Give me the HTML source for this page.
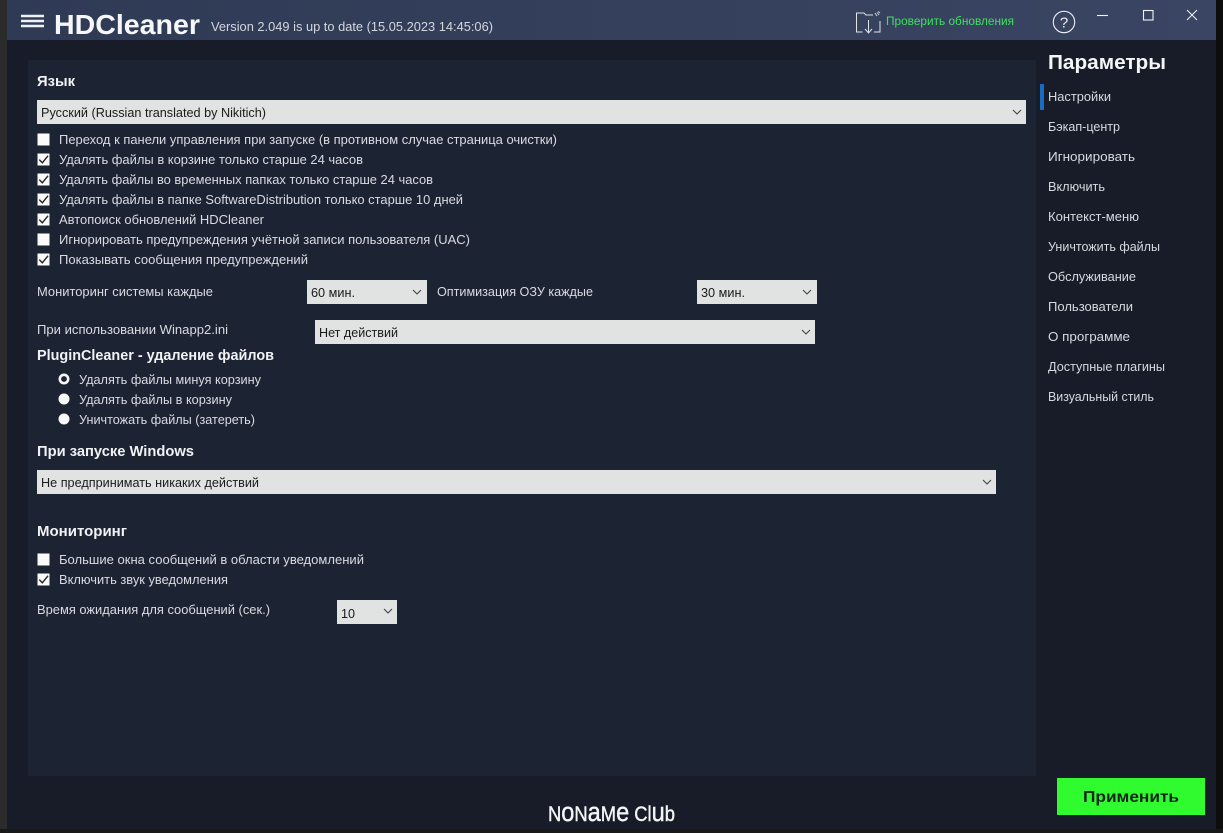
<!DOCTYPE html>
<html lang="ru"><head><meta charset="utf-8"><title>HDCleaner</title>
<style>
html,body{margin:0;padding:0;background:#111;width:1223px;height:833px;overflow:hidden}
svg{display:block}
text{font-family:"Liberation Sans","DejaVu Sans",sans-serif;font-size:13px;fill:#d9dbe0}
.d{fill:#1a1a1a;font-size:12.5px}
.b{font-weight:bold;fill:#f1f2f4;font-size:14.5px}
.s{fill:#d6d9df}
</style></head><body>
<svg width="1223" height="833" viewBox="0 0 1223 833" xmlns="http://www.w3.org/2000/svg">
<defs>
<linearGradient id="tb" x1="0" x2="1" y1="0" y2="0"><stop offset="0" stop-color="#2f3a55"/><stop offset="1" stop-color="#394562"/></linearGradient>
<path id="c" d="M-.5 -.5h12v12h-12z" fill="#fafafa"/>
<path id="k" d="M1.3 5.600l3 3.200 5.700-7" fill="none" stroke="#222" stroke-width="1.400"/>
<path id="a" d="M0 0l4 4 4-4" fill="none" stroke="#444" stroke-width="1.100"/>
</defs>
<rect width="7" height="833" fill="#2b2b2b"/>
<rect x="1216" width="7" height="833" fill="#0d0d0d"/>
<rect y="829" width="1223" height="4" fill="#181818"/>
<rect x="7" width="1209" height="829" fill="#171c28"/>
<rect x="7" width="1209" height="40" fill="url(#tb)"/>
<rect x="28" y="60" width="1008" height="716" fill="#1c2333"/>

<!-- title bar -->
<path d="M21 16h23M21 21h23M21 26h23" stroke="#eef0f3" stroke-width="2.400"/>
<text x="54" y="34" textLength="146" lengthAdjust="spacingAndGlyphs" style="font-size:28px;font-weight:bold;fill:#f6f7f9">HDCleaner</text>
<text x="211" y="31" textLength="282" lengthAdjust="spacingAndGlyphs" style="fill:#d3d7de">Version 2.049 is up to date (15.05.2023 14:45:06)</text>
<path d="M873 15h-7l-2-2h-7.500v19h6M880 21v11h-6M868.500 20v13M865 29l3.500 4 3.500-4" fill="none" stroke="#dfe3ea" stroke-width="1"/>
<path d="M875 13l2 3M877 12.500l2 2.500M878 11.500l2 1.500" stroke="#cfd3da" stroke-width="1"/>
<text x="886" y="25" textLength="128" lengthAdjust="spacingAndGlyphs" style="font-size:11.500px;fill:#3fe05f">Проверить обновления</text>
<circle cx="1064" cy="22" r="10.700" fill="none" stroke="#eef0f3" stroke-width="1.100"/>
<text x="1064" y="27.500" text-anchor="middle" style="font-size:15px;fill:#eef0f3">?</text>
<path d="M1097 15.500h11" stroke="#f2f3f5" stroke-width="1.100"/>
<rect x="1143.500" y="10.500" width="9.500" height="9.500" fill="none" stroke="#f2f3f5" stroke-width="1.100"/>
<path d="M1187 10l10 10M1197 10l-10 10" stroke="#f2f3f5" stroke-width="1"/>

<!-- language -->
<text class="b" x="37" y="86" textLength="38" lengthAdjust="spacingAndGlyphs">Язык</text>
<rect x="37" y="100" width="989" height="24" fill="#e1e2e2"/>
<text class="d" x="41" y="117" textLength="225" lengthAdjust="spacingAndGlyphs">Русский (Russian translated by Nikitich)</text>
<use href="#a" x="1013" y="110"/>

<!-- checkboxes -->
<use href="#c" x="38" y="134"/>
<use href="#c" x="38" y="154"/><use href="#k" x="38" y="154"/>
<use href="#c" x="38" y="174"/><use href="#k" x="38" y="174"/>
<use href="#c" x="38" y="194"/><use href="#k" x="38" y="194"/>
<use href="#c" x="38" y="214"/><use href="#k" x="38" y="214"/>
<use href="#c" x="38" y="234"/>
<use href="#c" x="38" y="254"/><use href="#k" x="38" y="254"/>
<text x="59" y="144" textLength="498" lengthAdjust="spacingAndGlyphs">Переход к панели управления при запуске (в противном случае страница очистки)</text>
<text x="59" y="164" textLength="304" lengthAdjust="spacingAndGlyphs">Удалять файлы в корзине только старше 24 часов</text>
<text x="59" y="184" textLength="374" lengthAdjust="spacingAndGlyphs">Удалять файлы во временных папках только старше 24 часов</text>
<text x="59" y="204" textLength="404" lengthAdjust="spacingAndGlyphs">Удалять файлы в папке SoftwareDistribution только старше 10 дней</text>
<text x="59" y="224" textLength="205" lengthAdjust="spacingAndGlyphs">Автопоиск обновлений HDCleaner</text>
<text x="59" y="244" textLength="411" lengthAdjust="spacingAndGlyphs">Игнорировать предупреждения учётной записи пользователя (UAC)</text>
<text x="59" y="264" textLength="249" lengthAdjust="spacingAndGlyphs">Показывать сообщения предупреждений</text>

<!-- monitoring row -->
<text x="37" y="296" textLength="176" lengthAdjust="spacingAndGlyphs">Мониторинг системы каждые</text>
<rect x="307" y="280" width="120" height="24" fill="#e1e2e2"/>
<text class="d" x="311" y="297" textLength="44" lengthAdjust="spacingAndGlyphs">60 мин.</text>
<use href="#a" x="413" y="290"/>
<text x="437" y="296" textLength="156" lengthAdjust="spacingAndGlyphs">Оптимизация ОЗУ каждые</text>
<rect x="697" y="280" width="120" height="24" fill="#e1e2e2"/>
<text class="d" x="701" y="297" textLength="44" lengthAdjust="spacingAndGlyphs">30 мин.</text>
<use href="#a" x="803" y="290"/>

<text x="37" y="334" textLength="191" lengthAdjust="spacingAndGlyphs">При использовании Winapp2.ini</text>
<rect x="315" y="320" width="500" height="24" fill="#e1e2e2"/>
<text class="d" x="319" y="337" textLength="79" lengthAdjust="spacingAndGlyphs">Нет действий</text>
<use href="#a" x="802" y="330"/>

<!-- plugin -->
<text class="b" x="37" y="360" textLength="237" lengthAdjust="spacingAndGlyphs">PluginCleaner - удаление файлов</text>
<circle cx="64" cy="379" r="4.200" fill="#1c2333" stroke="#f6f6f6" stroke-width="2.600"/>
<circle cx="64" cy="399" r="5.500" fill="#f8f8f8"/>
<circle cx="64" cy="419" r="5.500" fill="#f8f8f8"/>
<text x="79" y="384" textLength="182" lengthAdjust="spacingAndGlyphs">Удалять файлы минуя корзину</text>
<text x="79" y="404" textLength="153" lengthAdjust="spacingAndGlyphs">Удалять файлы в корзину</text>
<text x="79" y="424" textLength="176" lengthAdjust="spacingAndGlyphs">Уничтожать файлы (затереть)</text>

<!-- windows -->
<text class="b" x="37" y="456" textLength="157" lengthAdjust="spacingAndGlyphs">При запуске Windows</text>
<rect x="37" y="470" width="959" height="24" fill="#e1e2e2"/>
<text class="d" x="41" y="487" textLength="218" lengthAdjust="spacingAndGlyphs">Не предпринимать никаких действий</text>
<use href="#a" x="983" y="480"/>

<!-- monitoring -->
<text class="b" x="37" y="536" textLength="90" lengthAdjust="spacingAndGlyphs">Мониторинг</text>
<use href="#c" x="38" y="554"/>
<use href="#c" x="38" y="574"/><use href="#k" x="38" y="574"/>
<text x="59" y="564" textLength="305" lengthAdjust="spacingAndGlyphs">Большие окна сообщений в области уведомлений</text>
<text x="59" y="584" textLength="169" lengthAdjust="spacingAndGlyphs">Включить звук уведомления</text>
<text x="37" y="614" textLength="233" lengthAdjust="spacingAndGlyphs">Время ожидания для сообщений (сек.)</text>
<rect x="337" y="600" width="60" height="24" fill="#e1e2e2"/>
<text class="d" x="341" y="618" textLength="14" lengthAdjust="spacingAndGlyphs">10</text>
<use href="#a" x="384" y="609"/>

<!-- sidebar -->
<text x="1048" y="69" textLength="118" lengthAdjust="spacingAndGlyphs" style="font-size:20px;font-weight:bold;fill:#f4f5f7">Параметры</text>
<rect x="1040" y="84" width="4" height="26" fill="#1a6cc0"/>
<text class="s" x="1048" y="101" textLength="63" lengthAdjust="spacingAndGlyphs">Настройки</text>
<text class="s" x="1048" y="131" textLength="72" lengthAdjust="spacingAndGlyphs">Бэкап-центр</text>
<text class="s" x="1048" y="161" textLength="87" lengthAdjust="spacingAndGlyphs">Игнорировать</text>
<text class="s" x="1048" y="191" textLength="57" lengthAdjust="spacingAndGlyphs">Включить</text>
<text class="s" x="1048" y="221" textLength="91" lengthAdjust="spacingAndGlyphs">Контекст-меню</text>
<text class="s" x="1048" y="251" textLength="112" lengthAdjust="spacingAndGlyphs">Уничтожить файлы</text>
<text class="s" x="1048" y="281" textLength="88" lengthAdjust="spacingAndGlyphs">Обслуживание</text>
<text class="s" x="1048" y="311" textLength="85" lengthAdjust="spacingAndGlyphs">Пользователи</text>
<text class="s" x="1048" y="341" textLength="82" lengthAdjust="spacingAndGlyphs">О программе</text>
<text class="s" x="1048" y="371" textLength="117" lengthAdjust="spacingAndGlyphs">Доступные плагины</text>
<text class="s" x="1048" y="401" textLength="106" lengthAdjust="spacingAndGlyphs">Визуальный стиль</text>

<!-- apply -->
<rect x="1057" y="778" width="148" height="37" fill="#2ffb2e"/>
<text x="1083" y="802" textLength="96" lengthAdjust="spacingAndGlyphs" style="font-size:15.500px;font-weight:bold;fill:#10241a">Применить</text>

<!-- logo -->
<text x="548" y="821" textLength="127" lengthAdjust="spacingAndGlyphs" style="font-size:21px;fill:#f4f5f7;stroke:#f4f5f7;stroke-width:.4">N<tspan style="font-size:27px">o</tspan>N<tspan style="font-size:27px">a</tspan>M<tspan style="font-size:27px">e</tspan> Cl<tspan style="font-size:27px">u</tspan>b</text>
</svg>
</body></html>
